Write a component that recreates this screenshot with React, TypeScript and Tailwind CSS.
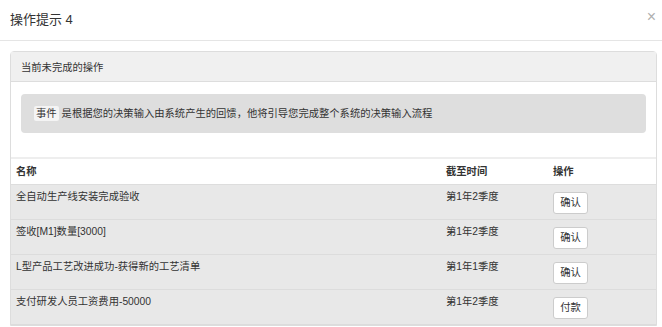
import React from "react";

interface Task {
  name: string;
  deadline: string;
  action: string;
}

const tasks: Task[] = [
  { name: "全自动生产线安装完成验收", deadline: "第1年2季度", action: "确认" },
  { name: "签收[M1]数量[3000]", deadline: "第1年2季度", action: "确认" },
  { name: "L型产品工艺改进成功-获得新的工艺清单", deadline: "第1年1季度", action: "确认" },
  { name: "支付研发人员工资费用-50000", deadline: "第1年2季度", action: "付款" },
];

const font = { fontFamily: '"Liberation Sans", "Noto Sans CJK SC", sans-serif' };

export default function App() {
  return (
    <div className="w-[662px] h-[327px] overflow-hidden bg-white text-[#333]" style={font}>
      {/* HEADER */}
      <div className="h-[41px] flex items-center justify-between pl-[10px] pr-[6px] border-b border-[#e5e5e5]">
        <h4 className="text-[13px] text-[#333]">操作提示 4</h4>
        <span className="text-[16px] text-[#b0b0b0] leading-none -mt-[6px]">×</span>
      </div>

      {/* PANEL */}
      <div className="mt-[10px] ml-[10px] w-[647px] border border-[#dddddd] rounded-t-[4px]">
        <div className="h-[30px] flex items-center px-[10px] pt-[2px] bg-[#f0f0f0] border-b border-[#dddddd] text-[10.3px] text-[#333]">
          当前未完成的操作
        </div>

        <div className="pt-[12px] pb-[24px] px-[10px]">
          <div className="h-[39px] flex items-center px-[13px] bg-[#dedede] rounded-[4px] text-[10.3px] text-[#333]">
            <span className="bg-[#f4f4f4] px-[2px] mr-[3px] rounded-[2px]">事件</span>
            是根据您的决策输入由系统产生的回馈，他将引导您完成整个系统的决策输入流程
          </div>
        </div>

        {/* TABLE */}
        <div className="border-t-2 border-[#eeeeee]">
          <div className="h-[26px] flex items-center text-[10.3px] font-bold text-[#333] border-b border-[#dddddd]">
            <div className="pl-[5px] w-[425px]">名称</div>
            <div className="w-[117px] pl-[10px]">截至时间</div>
            <div>操作</div>
          </div>
          {tasks.map((t) => (
            <div
              key={t.name}
              className="h-[35px] flex items-start bg-[#e8e8e8] border-b border-[#dcdcdc] text-[10.3px] leading-[14px] text-[#333]"
            >
              <div className="pl-[5px] pt-[5px] w-[425px]">{t.name}</div>
              <div className="w-[117px] pl-[10px] pt-[5px]">{t.deadline}</div>
              <div className="pt-[7px]">
                <button className="w-[35px] h-[22px] bg-white border border-[#cccccc] rounded-[3px] text-[10.3px] text-[#333] flex items-center justify-center">
                  {t.action}
                </button>
              </div>
            </div>
          ))}
        </div>
      </div>
    </div>
  );
}
